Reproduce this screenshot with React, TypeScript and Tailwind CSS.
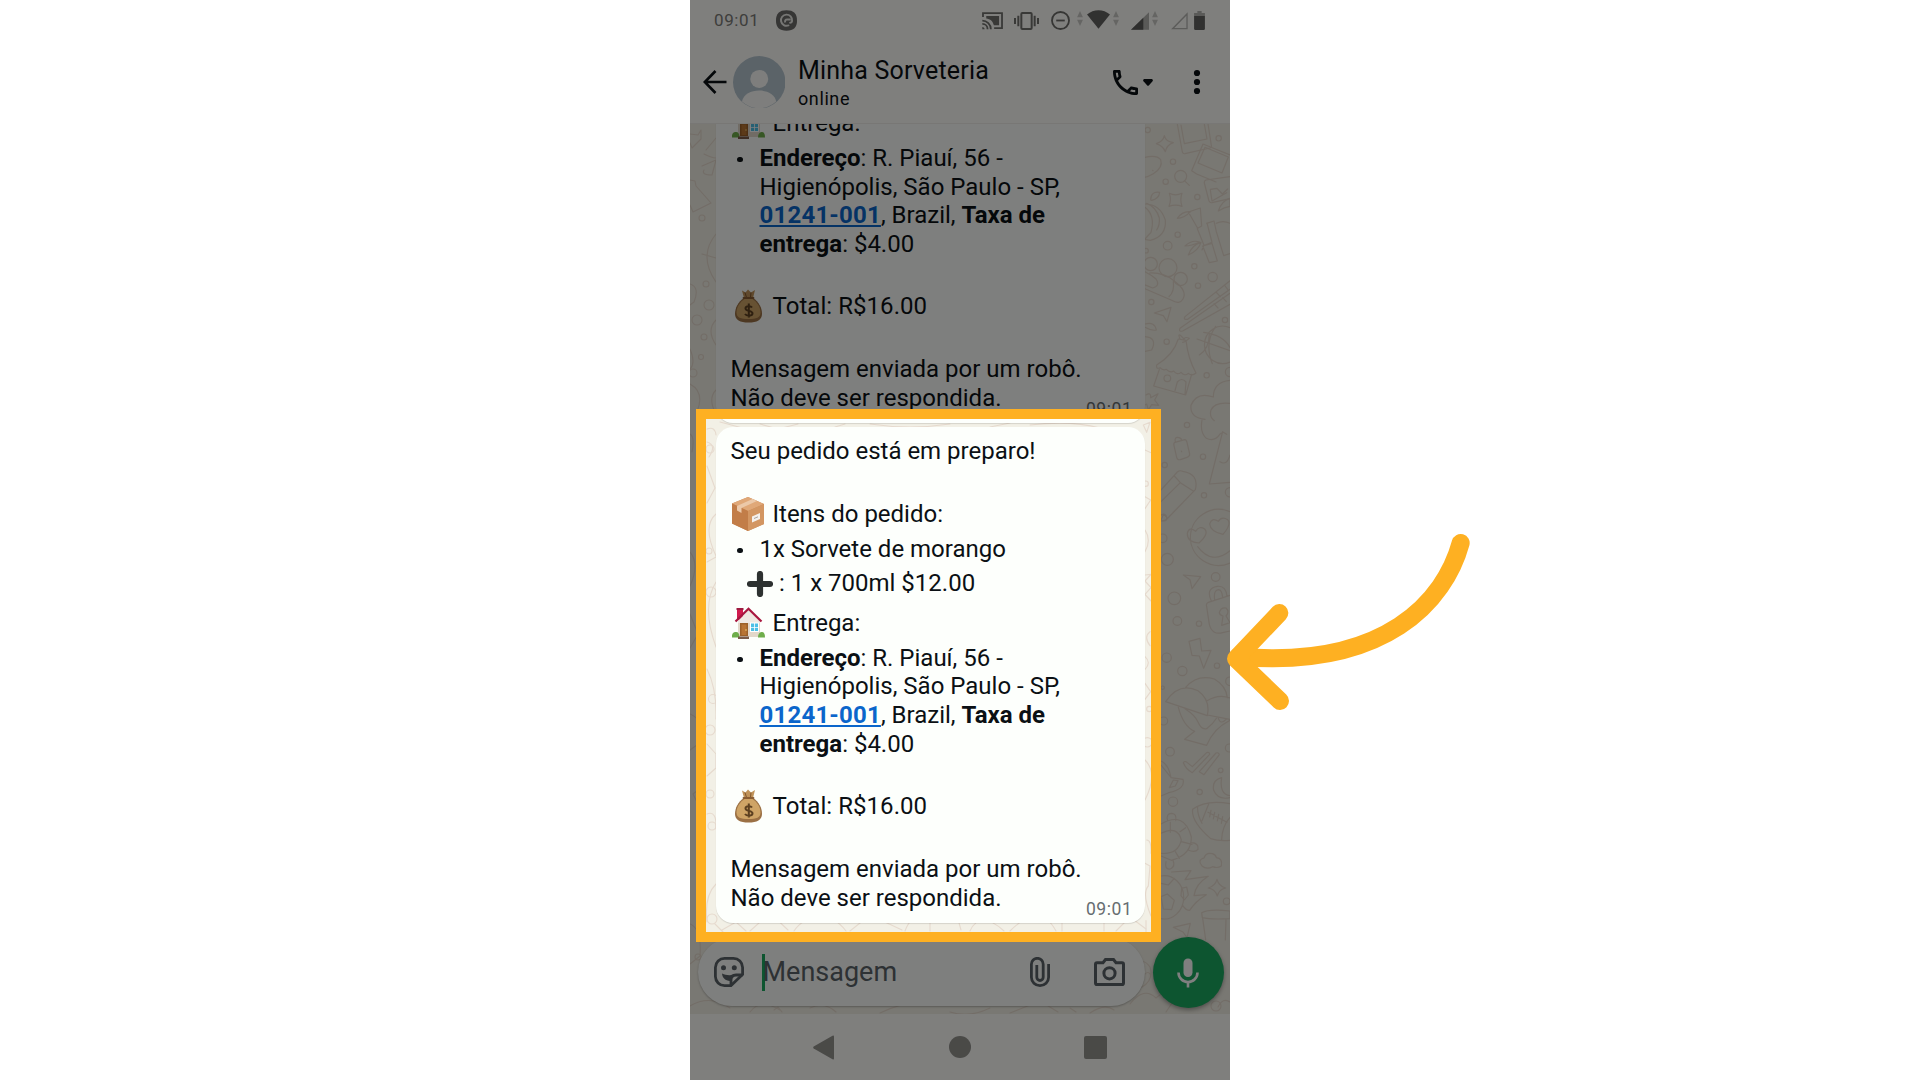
import type { ReactNode } from 'react';

// ─── Status bar icons ─────────────────────────────────────────────────────────

function CastIcon() {
  return (
    <svg viewBox="0 0 64 54" className="h-[18px] w-[21px] text-[#72726f]" fill="none" stroke="currentColor" strokeWidth="5.5">
      <path d="M3 15V3h58v46H37" />
      <path d="M13 12h39v28H36C34 28 25 20 13 19z" fill="currentColor" stroke="none" />
      <path d="M1 26c14 0 26 12 26 26M1 36c9 0 16 7 16 16" />
      <path d="M1 45c4 0 7 3 7 7H1z" fill="currentColor" stroke="none" />
    </svg>
  );
}

function VibrateIcon() {
  return (
    <svg viewBox="0 0 75 54" className="h-[18px] w-[25px] text-[#72726f]" fill="none" stroke="currentColor" strokeWidth="6">
      <rect x="22" y="3" width="31" height="48" rx="3" />
      <path d="M13 11v32M3 18v18M62 11v32M72 18v18" />
    </svg>
  );
}

function DndIcon() {
  return (
    <svg viewBox="0 0 58 58" className="size-[19px] text-[#6c6c69]" fill="none" stroke="currentColor" strokeWidth="5.5">
      <circle cx="29" cy="29" r="26" />
      <path d="M16 29h26" />
    </svg>
  );
}

function DataArrows() {
  return (
    <svg viewBox="0 0 18 46" className="h-[15px] w-[6px] fill-[#cbcbc7]">
      <path d="M0 19 9 0l9 19zM0 27l9 19 9-19z" />
    </svg>
  );
}

function WifiIcon() {
  return (
    <svg viewBox="0 0 70 58" className="h-[19px] w-[23px] fill-[#626260]">
      <path d="M0 14C20-4 50-4 70 14L35 57z" />
    </svg>
  );
}

function SignalIcon() {
  return (
    <svg viewBox="0 0 54 53" className="h-[18px] w-[18px]">
      <path d="M54 0v53H0z" fill="#b4b4b0" />
      <path d="M37 17v36H0z" fill="#5c5c5a" />
    </svg>
  );
}

function EmptySignalIcon() {
  return (
    <svg viewBox="0 0 52 53" className="h-[18px] w-[17px]" fill="none" stroke="#b8b8b4" strokeWidth="4">
      <path d="M49 5v45H5z" />
    </svg>
  );
}

function BatteryIcon() {
  return (
    <svg viewBox="0 0 33 58" className="h-[19px] w-[11px]">
      <path d="M10 0h13v6h10v10H0V6h10z" fill="#b4b4b0" />
      <path d="M0 15h33v39q0 4-4 4H4q-4 0-4-4z" fill="#626260" />
    </svg>
  );
}

function AppBadgeIcon() {
  return (
    <svg viewBox="0 0 64 62" className="h-[21px] w-[21px]">
      <path d="M32 0C54 0 64 10 64 31S54 62 32 62 0 52 0 31 10 0 32 0z" fill="#6c6c6a" />
      <path d="M38 46A17 17 0 1 1 49 32q-1 6-6 6" fill="none" stroke="#ecece8" strokeWidth="6" strokeLinecap="round" />
      <path d="M45 28H34q-8 0-6 9" fill="none" stroke="#ecece8" strokeWidth="6" />
    </svg>
  );
}

// ─── Emoji ────────────────────────────────────────────────────────────────────

function BoxEmoji() {
  return (
    <svg viewBox="0 0 32 34" className="h-[34px] w-[32px]">
      <path d="M0 6.500 16 0l16 7v20L16 34 0 26.500z" fill="#c98a58" />
      <path d="M0 6.500 16 0l16 7-16 7z" fill="#e0a878" />
      <path d="M0 6.500 16 14v20L0 26.500z" fill="#c27d48" />
      <path d="M16 14 32 7v20l-16 7z" fill="#d39662" />
      <path d="M5 9 20.500 1.900l4.500 2L9.500 11v5L5 13.500z" fill="#ecc9a9" />
      <path d="M20 19.500 28 16v6l-8 3.500z" fill="#f4f0ec" />
      <path d="m22 21.500 4-1.700" stroke="#a9a19a" strokeWidth="1" />
    </svg>
  );
}

function HouseEmoji() {
  return (
    <svg viewBox="0 0 33 32" className="h-[32px] w-[33px]">
      <path d="M5 1.500h6V13H5z" fill="#d01c4e" />
      <path d="M4.500 1h7v2h-7z" fill="#a01a40" />
      <path d="M6 14 16.500 3.500 28 14.500V30H6z" fill="#e3d8ca" />
      <path d="m6 14 10.500-10L28 14.500v1.500H6z" fill="#efe9e2" />
      <path d="M3.500 14.500 16.500 1.700 29.500 14.500" fill="none" stroke="#a8173f" strokeWidth="2.200" />
      <path d="M8 16h8v13H8z" fill="#9c6128" />
      <path d="M9.500 17.500h5V28h-5z" fill="#b87433" />
      <circle cx="14" cy="23" r=".8" fill="#f3cf73" />
      <path d="M18 15.500h9v9.500h-9z" fill="#fff" />
      <path d="M19 16.500h3.200V20H19zm4 0h3V20h-3zm-4 4.300h3.200V24H19zm4 0h3V24h-3z" fill="#4cc0e6" />
      <path d="M0 30.500q-.5-5 3.500-5.500t4 5.500zM26 30.500q0-5 3.500-5.500t3.500 5.500z" fill="#6fae4b" />
      <path d="M6 29.500h11V32H6z" fill="#7a5b48" />
    </svg>
  );
}

function MoneyEmoji() {
  return (
    <svg viewBox="0 0 27 34" className="mx-[3px] h-[34px] w-[27px]">
      <path d="m9 9-2-7.500 3.500 2L13 .5l3 3 4-2.500-2 8z" fill="#c0935a" />
      <path d="m10 3.500 1.500 5M16 3.500l-.5 5" stroke="#80552b" strokeWidth="1" />
      <path d="M9 9C3 13 0 19 0 25c0 6 5 8.500 13.500 8.500S27 31 27 25c0-6-3-12-9-16z" fill="#9b7044" />
      <path d="M9.500 10C5 13 1.500 18 1.500 23.500c0 5 4 6.500 12 6.500s12-1.500 12-6.500C25.500 18 22 13 17.500 10z" fill="#cfa466" />
      <path d="M8.500 9h10" stroke="#8a5d33" strokeWidth="1.800" strokeLinecap="round" />
      <path d="M17 18.500c-1-1.500-6.500-2-6.500 1 0 3 7 1.800 7 4.800 0 3.200-6 2.800-7.500.7M13.800 14.500v14" fill="none" stroke="#5d4020" strokeWidth="2" />
    </svg>
  );
}

function PlusEmoji() {
  return (
    <svg viewBox="0 0 26 26" className="size-[26px]">
      <path d="M13 3v20M3 13h20" stroke="#2d3130" strokeWidth="6.200" strokeLinecap="round" />
    </svg>
  );
}

// ─── Wallpaper ────────────────────────────────────────────────────────────────

const RIGHT_DOTS: [number, number, number][] = [
  [53, 30, 8], [266, 55, 8], [129, 125, 8], [107, 185, 8], [152, 169, 18], [202, 231, 8], [143, 344, 8],
  [113, 377, 13], [48, 392, 7], [62, 432, 20], [114, 443, 27], [152, 477, 20], [193, 439, 8], [248, 471, 14],
  [204, 497, 8], [64, 546, 8], [285, 600, 8], [110, 665, 8], [230, 766, 8], [112, 775, 10], [300, 756, 14],
  [171, 915, 8], [219, 1010, 8], [104, 1035, 8], [222, 1126, 8], [300, 1117, 14], [100, 1193, 10],
  [112, 1318, 18], [98, 1255, 13], [257, 1371, 13], [133, 1435, 19], [142, 1503, 13], [207, 1511, 8],
  [110, 1613, 14], [157, 1653, 14], [261, 1637, 8], [98, 1703, 5], [300, 1684, 13], [101, 1803, 12],
  [120, 1895, 13], [272, 1951, 7], [209, 2016, 8], [129, 2045, 14], [290, 2344, 10], [298, 1884, 12],
  [47, 1091, 8], [58, 1767, 8], [52, 1867, 14],
];

const RIGHT_SHAPES = [
  // sparkles
  'M103 47q4 18 27 21-20 7-24 27-7-17-27-24 21-7 24-24z',
  'M118 220q18 9 38 0-7 18 0 39-20-7-39 0 8-20 1-39z',
  'M261 2278q5 20 26 26-20 4-25 24-6-20-27-24 21-7 26-26z',
  // photos
  'M142 12l15 84q2 6 8 5l75-17q6-2 4-8L234 12M153 15l10 56 68-14-8-45',
  'M219 72 300 105M219 72l-34 80 15 10 58 24M225 82l70 29-19 48-72-30z',
  'M300 170 228 180q-6 2-5 9l14 54q3 6 9 5l54-12M241 208l20-3 16 17 16-15M241 210l5 33 44-25',
  // potato, pumpkin
  'M45 112q35-8 47 7 8 24-22 42-15 9-27 11M68 151l1 1',
  'M45 252q45 0 61 48 4 48-45 61l-18-3M45 262q32 25 18 75l-18 20M50 250q28 10 38 44 2 20-8 36M62 240q0-27 27-23-2 19-24 24z',
  // bamboo
  'M175 276l36-12 4 54-12 7zM202 326l20 50-6 14M218 378l20 50 24-5-16-53zM231 309l15 58-22 9M142 295q15-23 40-20-20 20-40 20zM165 378q21-20 44-12-25 12-44 12zM175 405q10-30 38-38-8 25-38 38M230 310l22-7 7 32 22 72 19-6M259 310q20-10 41 0M265 273q9-30 35-38v24q-17 2-35 14z',
  // ladle of berries
  'M45 455q20 10 33 22 14 20-10 27l-25-10M45 506l80 35q24 14 34-4 14-26-28-55-30-25-72-23M117 530q17-15 13-45',
  // paper planes
  'M73 579l50-17-12 43-11-18zM160 1365l52 5-26 36-6-27zM130 2422l51-12-10 43-12-17z',
  // chopsticks
  'M300 482 165 590q-6 10 8 8l127-90M300 520 150 625q-5 11 8 8l142-80M258 516l13 14M252 551l12 13M283 495l10 13M278 533l11 12',
  // leaf and bean
  'M45 612q30-8 34 18-15 3-34-8M45 650q38 3 20 40l-20 4',
  // basketball
  'M300 623a55 56 0 1 0 0 103M201 657l99 35M257 619q-35 50-10 112M221 637q60 8 79 46M208 705q30-20 30-64',
  // hut
  'M80 735q50-30 65-78l23 4q6 55 30 98-12 11-23 1-11 10-22-3-11 10-22-4-10 7-22-5-10 5-19-5-13 6-10-8zM88 748l-17 50 96 27 18-62M135 812l7-26q13-15 26 0l-3 36M150 657q-10-25 12 0 4-8 16-2-10 10-20 12',
  // puzzle, flower, cloud
  'M48 825q15-10 14 8l22-12-10 19 12 16-21-2-10 16-5-18-9 5M300 781q-50 5-50 50-50-17-67 25-4 37 42 42M243 870q11-25 57-20M243 870q-6 20 10 32',
  // padlock
  'M135 967l29-8q5 0 7 8l8 35q0 8-8 10l-20 7q-9 2-11-7l-8-35q-2-8 3-10zM136 966q-4-17 11-13 8 2 8 9M154 993l1 2',
  // spade and sail
  'M216 900q-7 38 13 55 25 12 42-14l9-4 10 6M278 935l-40 157 62-5M270 1025q21 14 30-20',
  // pencil
  'M93 1110l50-55q7-5 15-1 50 8 38 55l-88 91-15 3M93 1145l58-57-18-20M151 1088l40 26M93 1200l8-18 10 10',
  // smiley with heart eyes
  'M300 1175a85 84 0 1 0 0 154M172 1240q5-22 25-6 11-18 27-7 14 14-17 42-36-2-35-29zM239 1212q6-21 26-8 10-16 28-5 13 13-14 44-38-8-40-31zM203 1280q43 57 97 12',
  // open padlock
  'M300 1426l-65 21q-8 4-5 13l8 53q8 33 40 25l22-5M244 1443q-18-38 18-44 25-3 29 29M254 1440q-4-30 11-31 11 0 13 24M268 1478q4-16 20-14 12 11 0 24l12 20-25 8 4-28q-10-2-11-10z',
  // lightning
  'M177 1564l33-9 5 38 28-2-22 54-13-37-22-2z',
  // umbrella-like leaf
  'M107 1745q40-60 97-33 38 27 28 75zM167 1702q35-40 86-25 35 20 39 56M230 1743q35-22 70-9M232 1785l68 13M145 1762q15 57 49 72l-30 24 66 18q21-51 70-75M165 1766q31 20 39 40 10 24 26 20 20-15 32-35M265 1795q7 21 24 2',
  // checks
  'M160 1928q5-7 12 0l15 12 43-42q8-3 9 5l-52 55q-19-10-27-30zM208 1955l50-56q8-3 10 5l-46 60z',
  // cup
  'M93 1923q23 10 30 50l36 5q8 30-43 40l-23 10M93 1935l28 35M130 1980l14 2-8 16-18 5z',
  // moon
  'M275 1973q-30 8-24 38 12 30 49 22M275 1973q-8 50 25 54',
  // football
  'M188 2068q40-30 112-17M188 2068q-6 35 54 88 24 8 58 5M203 2060q-2 22 13 50M236 2052l-20 50M300 2092q-24 27-25 67M234 2077l57 30M243 2071l-4 20M254 2077l-4 20M266 2083l-4 20M278 2090l-4 20',
  // turtle
  'M93 2112q70-40 91 39 1 54-60 70l-31-13M93 2140q50-25 61 20-10 45-61 40M113 2102q-6-22 12-22 16 1 12 22M184 2168q23 1 20 20-9 11-30 2M108 2225q-5 25 13 22 16-7 8-26M150 2135l17-12M154 2165l32 8M136 2195l12 20M121 2137v-30',
  // small cloud
  'M216 2238q-15-18 6-24 6-18 25-13 11 4 12 12 20 2 15 25-12 8-26 2-18 10-32-2z',
  // fireball
  'M93 2268a58 65 0 1 1 0 128M125 2256l58-4-18 27 70-10q-38 23-43 58l37-3q-33 20-50 47-12 0-21-15M93 2330l19-8 21 19-8 28-25-2zM155 2305l15-4 5 24-12 15-10-13zM93 2290l22 5 18-20',
  // pot
  'M215 2378q22-12 85-5v23q-60 3-83-3zM218 2395l9 64M288 2397l-2 63',
  // inside-frame fragments
  'M40 915l20-8-10 30zM45 990l18 8M45 1130l17 10-17 26M45 1230q20 30 0 65M45 1365l18-2-18 20 18 20-18 20 18 20M60 1535q-20 15 0 42M45 1610q20 18 0 38M45 1690l17 25-17 23M45 1920q40 40 0 120M50 2160q15 0 13 40M45 2230l15 8-5 60q-20 22 8 90M48 2402v38',
];

const LEFT_SHAPES = [
  'M0 10l8 1 3-5v9l-9 9-2-5M16 26l10-12M14 30q8 4 12 4M12 42l14-6-4 15q-11 0-8-5M0 56l5 1 1 5 15 17-18 9-3-7M26 110q-18 22 0 48M12 130l14 4M0 160q10 3 4 18l-4 3M26 196q-10 10 0 25M0 225q6 14 0 20M0 260q15 8 7 28M26 266q-8 8-1 22M0 310q5 3 2 18M0 428q10 12 0 34M0 490l8 20-8 14M0 590q14 6 14 26l-14 10M3 670l10-8-4 20zM0 800q12 5 10 32l-10 8',
  'M17 305q8-3 9 6M17 318q10 3 2 15M17 342l8 22-8 15M26 390q-14 12 0 42M17 438l9-5M26 458q-15 24 0 65M17 545q10 20 9 50M17 620l9 10v14l-9 8M17 690q10-4 9 15M26 760q-12 12-9 38',
  'M25 800l8 8M32 806l14-8 10 9M60 807l20-18 18 17M104 807q12-18 38-12 8 4 14 12M160 807l20-16 32 15M215 807q6-16 16-12M240 807v-16l26-3 5 18M280 807q10-22 34 0M320 807q30-30 46 0M372 807v-10h42v10M426 807l14-14 16 12',
  'M30 298l30 8M70 300l18 5 20-5M145 303l10-3M180 300q40 6 80 0M300 303l20-4M340 301q40-5 70 3',
  'M0 882q20-12 40 2M60 888q10-14 30-2M84 886l4-3 4 5M120 884q14-7 26 4M190 889q34-16 50-8M260 888q20 6 40-4M320 889l30-12 18 11M380 884l6 4M400 889q15-10 24-3',
  'M440 845q12-14 20-2 4 13-8 20-12-2-12-18zM446 850q3-3 5 0M455 850q3-3 5 0M440 880q14-18 26-6 10-10 18 2l-8 12M500 860q20-5 20 10M528 883q5-10 12-5',
];

const LEFT_DOTS: [number, number, number][] = [
  [12, 94, 3], [16, 160, 3], [19, 181, 5], [7, 196, 5], [14, 213, 3], [11, 233, 2.5], [3, 249, 4],
  [20, 325, 4], [19, 427, 3], [21, 468, 5], [23, 575, 4.5], [20, 606, 5], [20, 670, 4], [22, 702, 4],
  [22, 795, 5], [8, 833, 3], [526, 882, 5],
];

function Wallpaper() {
  return (
    <svg
      viewBox="0 0 540 890"
      className="absolute inset-0 h-full w-full"
      fill="none"
      stroke="#e6dace"
      strokeWidth="1.1"
      strokeLinejoin="round"
      strokeLinecap="round"
    >
      <g transform="translate(440 -4) scale(.33333)" strokeWidth="3.500">
        {RIGHT_SHAPES.map((d) => <path key={d} d={d} />)}
        {RIGHT_DOTS.map(([x, y, r]) => <circle key={`${x}-${y}`} cx={x} cy={y} r={r} />)}
        <path d="m163 182 15 14" />
      </g>
      {LEFT_SHAPES.map((d) => <path key={d} d={d} />)}
      {LEFT_DOTS.map(([x, y, r]) => <circle key={`${x}-${y}`} cx={x} cy={y} r={r} />)}
    </svg>
  );
}

// ─── Message ──────────────────────────────────────────────────────────────────

function EmojiLine({ icon, children }: { icon: ReactNode; children: ReactNode }) {
  return (
    <div className="flex h-[34px] items-end">
      <span className="mt-[4px] mr-[8px] ml-px flex w-[33px] shrink-0 items-end justify-center self-center">{icon}</span>
      <span>{children}</span>
    </div>
  );
}

function Bullet({ children }: { children: ReactNode }) {
  return (
    <div className="mt-[6px] flex">
      <span className="mt-[13px] mr-[17px] ml-[6.500px] size-[5.500px] shrink-0 rounded-full bg-[#0b1014]" />
      <p className="whitespace-nowrap">{children}</p>
    </div>
  );
}

function MessageBubble({ children }: { children: ReactNode }) {
  return (
    <div className="relative ml-[25.5px] w-[429px] shrink-0 rounded-[17px] bg-[#fdfffc] pt-[10px] pr-4 pb-[10.500px] pl-[15px] text-[24px] leading-[28.6px] whitespace-nowrap text-[#0b1014] shadow-[0_1px_1px_rgba(0,0,0,0.12)]">
      {children}
      <span className="absolute right-[12px] bottom-[5px] text-[17.500px] leading-none tracking-[0.6px] text-[#666d70]">
        09:01
      </span>
    </div>
  );
}

function OrderItems() {
  return (
    <>
      <p>Seu pedido está em preparo!</p>
      <div className="mt-[29px]">
        <EmojiLine icon={<BoxEmoji />}>Itens do pedido:</EmojiLine>
      </div>
      <Bullet>1x Sorvete de morango</Bullet>
      <div className="mt-[6px] mb-[6px] flex h-[28.6px] items-center pl-[16px]">
        <PlusEmoji />
        <span className="ml-[6.500px]">: 1 x 700ml $12.00</span>
      </div>
    </>
  );
}

function DeliveryDetails() {
  return (
    <>
      <EmojiLine icon={<HouseEmoji />}>Entrega:</EmojiLine>
      <Bullet>
        <b>Endereço</b>: R. Piauí, 56 -<br />
        Higienópolis, São Paulo - SP,<br />
        <b className="tracking-[0.2px] text-[#0b66cb] underline decoration-[1.500px] underline-offset-[2px]">01241-001</b>, Brazil, <b>Taxa de</b><br />
        <b>entrega</b>: $4.00
      </Bullet>
      <div className="mt-[28.6px]">
        <EmojiLine icon={<MoneyEmoji />}>
          <span className="tracking-[0.05px]">Total: R$16.00</span>
        </EmojiLine>
      </div>
      <p className="mt-[34.500px]">
        Mensagem enviada por um robô.<br />
        Não deve ser respondida.
      </p>
    </>
  );
}

// ─── Header ───────────────────────────────────────────────────────────────────

function StatusBar() {
  return (
    <div className="flex h-[41px] items-center pl-[24px] text-[17px] text-[#7c7c79]">
      <span className="w-[61.500px] pt-px tracking-[0.6px]">09:01</span>
      <AppBadgeIcon />
      <div className="ml-[185.500px] flex items-center">
        <CastIcon />
        <span className="ml-[11px]"><VibrateIcon /></span>
        <span className="ml-[12px]"><DndIcon /></span>
        <span className="mt-[-4px] ml-[7px]"><DataArrows /></span>
        <span className="mt-[-2px] ml-[4px]"><WifiIcon /></span>
        <span className="mt-[-4px] ml-[3px]"><DataArrows /></span>
        <span className="ml-[12px]"><SignalIcon /></span>
        <span className="mt-[-4px] ml-[3px]"><DataArrows /></span>
        <span className="ml-[13px]"><EmptySignalIcon /></span>
        <span className="ml-[6px]"><BatteryIcon /></span>
      </div>
    </div>
  );
}

function ChatHeader() {
  return (
    <div className="flex h-[82px] items-center text-[#0b1014]">
      <svg viewBox="0 0 24 24" className="ml-[13px] size-[24px]" fill="none" stroke="currentColor" strokeWidth="2.700">
        <path d="M23.500 12H2M12.500 1 1.800 12l10.700 11" />
      </svg>
      <svg viewBox="0 0 158 158" className="ml-[5.500px] size-[52.500px]">
        <circle cx="79" cy="79" r="79" fill="#b7c7d1" />
        <circle cx="79" cy="69" r="27" fill="#fdfdfa" />
        <path d="M27 137c8-44 95-44 103 0a76 76 0 0 1-103 0z" fill="#fdfdfa" />
      </svg>
      <div className="ml-[13px] w-[314.500px] pt-px">
        <div className="text-[25px] leading-[30px] tracking-[0.2px]">Minha Sorveteria</div>
        <div className="mt-[2px] text-[18px] leading-[22px] tracking-[0.6px]">online</div>
      </div>
      <svg viewBox="3 3 18 18" className="size-[25px]" fill="currentColor">
        <path d="M6.540 5c.06.89.21 1.760.45 2.590l-1.200 1.200c-.41-1.200-.67-2.470-.76-3.790h1.510m9.860 12.020c.85.24 1.720.39 2.600.45v1.490c-1.320-.09-2.590-.35-3.800-.75l1.200-1.190M7.500 3H4c-.55 0-1 .45-1 1 0 9.390 7.610 17 17 17 .55 0 1-.45 1-1v-3.490c0-.55-.45-1-1-1-1.240 0-2.450-.2-3.570-.57a.84.84 0 0 0-.31-.05c-.26 0-.51.1-.71.29l-2.200 2.200a15.150 15.150 0 0 1-6.590-6.590l2.200-2.200c.28-.28.36-.67.25-1.020A11.360 11.360 0 0 1 8.500 4c0-.55-.45-1-1-1z" />
      </svg>
      <svg viewBox="0 0 10 7" className="ml-[5px] h-[7px] w-[10px]" fill="currentColor">
        <path d="M1 0h8q1.500 1 .5 2.300L6 6.300q-1 1-2 0L.5 2.300Q-.5 1 1 0z" />
      </svg>
      <svg viewBox="0 0 8 26" className="ml-[40px] h-[26px] w-[8px]" fill="currentColor">
        <circle cx="4" cy="4" r="3.100" />
        <circle cx="4" cy="13" r="3.100" />
        <circle cx="4" cy="22" r="3.100" />
      </svg>
    </div>
  );
}

// ─── Composer ─────────────────────────────────────────────────────────────────

function Composer() {
  return (
    <div className="flex h-[77px] shrink-0 items-start pl-[7.500px]">
      <div className="mt-[1px] flex h-[68px] w-[447.500px] items-center rounded-full bg-[#fdfffc] text-[#5b6368] shadow-[0_1px_2px_rgba(0,0,0,0.25)]">
        <svg viewBox="0 0 30 30" className="ml-[16.500px] size-[30px]" fill="none" stroke="currentColor" strokeWidth="2.800">
          <path d="M17 28.600h-6.500A9.200 9.200 0 0 1 1.400 19.500v-9a9.200 9.200 0 0 1 9.100-9.100h9a9.200 9.200 0 0 1 9.100 9.100v7z" />
          <path d="M17 28.500V23q0-5 5-5h6.500" />
          <path d="M8 16.500c4 2 8 2 13.500 1-4 1-5.500 3-5.500 6.500-4.500-.3-7.700-3-8-7.500z" fill="currentColor" stroke="none" />
          <circle cx="9.500" cy="10.700" r="2.500" fill="currentColor" stroke="none" />
          <circle cx="20.300" cy="10.700" r="2.500" fill="currentColor" stroke="none" />
        </svg>
        <span className="ml-[18px] h-[37px] w-[3px] bg-[#1daa61]" />
        <span className="ml-[-2.500px] w-[267.500px] pt-px text-[27px]">Mensagem</span>
        <svg viewBox="0 0 20 30" className="h-[30px] w-[20px]" fill="none" stroke="currentColor" strokeWidth="2.800">
          <path d="M18.600 7v13.300a8.600 8.300 0 0 1-17.200 0V7.300a5.900 6 0 0 1 11.800 0v13a3.200 3.200 0 0 1-6.400 0V8" />
        </svg>
        <svg viewBox="0 0 31 28" className="ml-[44px] h-[28px] w-[31px]" fill="none" stroke="currentColor" strokeWidth="3">
          <path d="M3 4.700h6L11.500 1.500h8L22 4.700h6q1.500 0 1.500 1.600v18.600q0 1.600-1.500 1.600H3q-1.500 0-1.500-1.600V6.300Q1.500 4.700 3 4.700z" />
          <circle cx="15.500" cy="15.300" r="5.600" />
        </svg>
      </div>
      <div className="ml-[7.500px] flex size-[71px] items-center justify-center rounded-full bg-[#1aab60] shadow-[0_2px_4px_rgba(0,0,0,0.35)]">
        <svg viewBox="0 0 22 30" className="h-[30px] w-[22px]">
          <rect x="6.500" y="0.500" width="9" height="18.500" rx="4.500" fill="#fff" />
          <path d="M1.500 14.500a9.500 9.500 0 0 0 19 0M11 24v5.500" fill="none" stroke="#fff" strokeWidth="2.600" />
        </svg>
      </div>
    </div>
  );
}

function NavBar() {
  return (
    <div className="flex h-[66px] items-center bg-[#fffefb] pl-[123px]">
      <svg viewBox="0 0 21 25" className="h-[25px] w-[21px] fill-[#94948f]">
        <path d="M21 1.500v22q0 1.500-1.500.7L.7 13.500q-1-1 0-2L19.500.8q1.500-.8 1.500.7z" />
      </svg>
      <span className="ml-[115px] size-[22px] rounded-full bg-[#94948f]" />
      <span className="ml-[112.500px] size-[23px] rounded-[2px] bg-[#94948f]" />
    </div>
  );
}

// ─── Page ─────────────────────────────────────────────────────────────────────

export default function App() {
  return (
    <div className="relative flex h-[1080px] w-[1920px] justify-center overflow-hidden bg-white font-[Roboto,sans-serif]">
      <div className="relative flex w-[540px] flex-col overflow-hidden">
        <div className="h-[124px] shrink-0 border-b border-[#f0eeea] bg-[#fffefb]">
          <StatusBar />
          <ChatHeader />
        </div>

        <div className="relative h-[890px] shrink-0 overflow-hidden bg-[#f2f0e6]">
          <Wallpaper />
          <div className="relative flex h-full flex-col justify-end">
            {/* Scrolled so only the delivery part of the previous message is left */}
            <MessageBubble>
              <DeliveryDetails />
            </MessageBubble>
            <div className="h-1 shrink-0" />
            <MessageBubble>
              <OrderItems />
              <DeliveryDetails />
            </MessageBubble>
            <div className="h-[14px] shrink-0" />
            <Composer />
          </div>
        </div>

        <NavBar />

        {/* Spotlight: the shadow dims everything outside the frame */}
        <div className="absolute top-[409px] left-[6px] h-[533px] w-[465px] border-10 border-[#feb022] shadow-[0_0_0_1200px_rgba(0,0,0,0.5)]" />
      </div>

      <svg
        viewBox="0 0 900 720"
        className="absolute top-[500px] left-[1200px] h-[240px] w-[300px]"
        fill="none"
        stroke="#feb022"
        strokeWidth="54"
        strokeLinecap="round"
        strokeLinejoin="round"
      >
        <path d="M782 129C735 300 560 508 115 470" />
        <path d="M238 339 108 476 240 603" />
      </svg>
    </div>
  );
}
